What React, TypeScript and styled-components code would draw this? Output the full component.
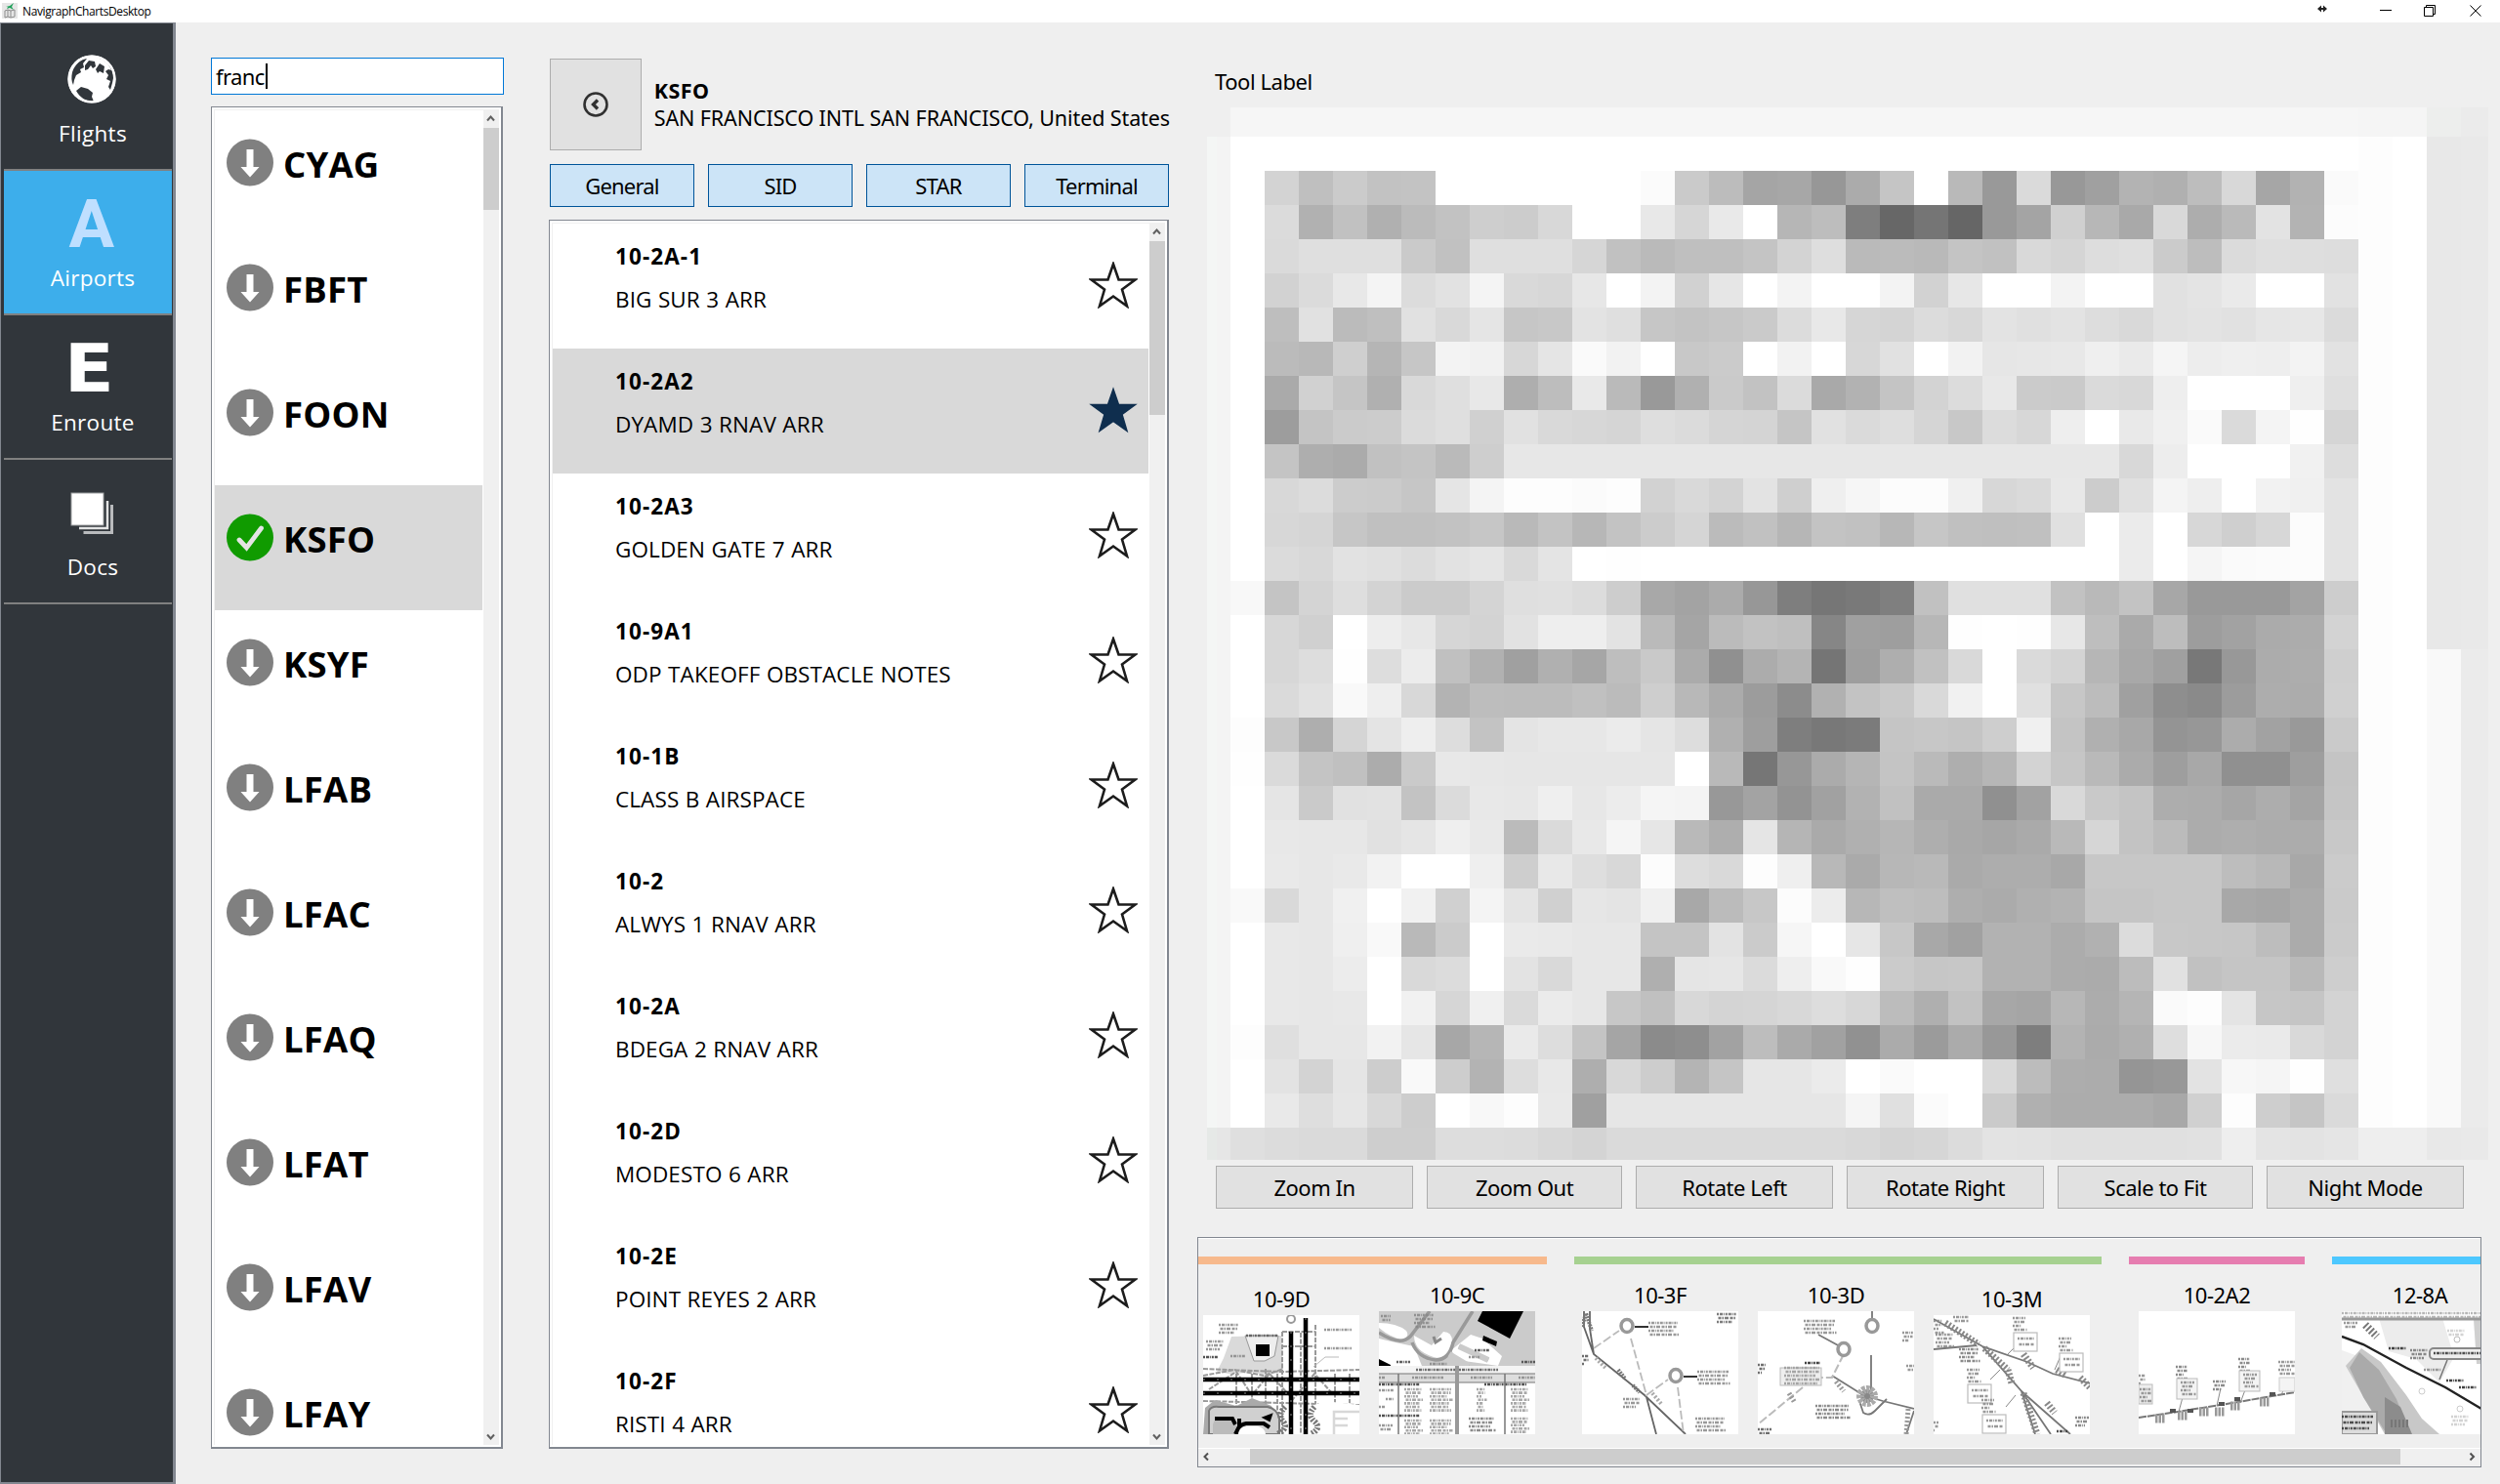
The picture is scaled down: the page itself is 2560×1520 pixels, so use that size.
import React from 'react';
import styled, { createGlobalStyle } from 'styled-components';

const tahoma = `'Noto Sans', 'Open Sans', sans-serif`;
const segoe = `'Open Sans', 'Noto Sans', sans-serif`;

const GlobalStyle = createGlobalStyle`
  * { box-sizing: border-box; }
  body { margin: 0; background: #efefef; overflow: hidden; }
  button { padding: 0; margin: 0; border-radius: 0; }
`;

const Window = styled.div`
  width: 2560px;
  height: 1520px;
  display: flex;
  flex-direction: column;
  background: #efefef;
  color: #000;
  font-family: ${tahoma};
`;

const TitleBar = styled.header`
  height: 23px;
  flex: none;
  background: #fff;
  display: flex;
  align-items: center;
  padding-left: 2px;
  font: 12px/20px ${segoe};
`;
const TitleText = styled.span`
  margin-left: 5px;
  flex: 1;
  letter-spacing: -0.4px;
`;
const WindowButtons = styled.svg`
  width: 220px;
  height: 23px;
`;
const Body = styled.div`
  flex: 1;
  display: flex;
  align-items: flex-start;
`;

const Sidebar = styled.nav`
  width: 180px;
  height: 1497px;
  background: #31363b;
  border: solid #828790;
  border-width: 1px 3px 2px 1px;
  padding: 3px 1px 0 3px;
`;
const NavItem = styled.div<{ $active?: boolean }>`
  height: 148px;
  border-bottom: 2px solid #808080;
  background: ${p => (p.$active ? '#3daeeb' : 'transparent')};
  display: flex;
  flex-direction: column;
  align-items: center;
  padding: 14px 0 0 10px;
`;
const NavIcon = styled.div`
  height: 81px;
  display: flex;
  align-items: center;
  justify-content: center;
  margin-left: -2px;
`;
const NavLetter = styled.span<{ $color: string; $wide?: boolean }>`
  font: bold 68px/80px ${p => (p.$wide ? `'DejaVu Sans', sans-serif` : `Roboto, sans-serif`)};
  color: ${p => p.$color};
  margin-left: ${p => (p.$wide ? -5 : 0)}px;
  transform: scaleX(${p => (p.$wide ? 1.1 : 1.02)});
`;
const NavLabel = styled.span`
  font: 22.5px/30px ${segoe};
  letter-spacing: 0.3px;
  color: #fff;
`;

const AirportColumn = styled.section`
  width: 300px;
  margin: 36px 0 0 36px;
  display: flex;
  flex-direction: column;
  gap: 12px;
`;
const SearchBox = styled.div`
  height: 38px;
  border: 1px solid #0078d7;
  background: #fff;
  display: flex;
  align-items: center;
  padding-left: 4px;
  font: 22px/36px ${tahoma};
  letter-spacing: -0.6px;
`;
const Caret = styled.i`
  width: 2px;
  height: 26px;
  margin-left: 1px;
  background: #000;
`;
const ListFrame = styled.div<{ $w: number; $h: number }>`
  width: ${p => p.$w}px;
  height: ${p => p.$h}px;
  background: #fff;
  border: solid #828790;
  border-width: 1px 2px 2px 1px;
  padding: 2px 2px 2px 2px;
  display: flex;
`;
const Rows = styled.div`
  flex: 1;
  border: solid #f0f0f0;
  border-width: 1px 0 0 1px;
  overflow: hidden;
`;
const AirportRow = styled.div<{ $selected?: boolean }>`
  height: 128px;
  margin-right: 1px;
  background: ${p => (p.$selected ? '#d9d9d9' : '#fff')};
  display: flex;
  padding: 29px 0 0 12px;
`;
const AirportCode = styled.span`
  font: bold 36.5px/52px ${segoe};
  letter-spacing: 0.2px;
  margin-left: 10px;
`;
const ScrollTrack = styled.div`
  width: 16px;
  background: #f0f0f0;
  display: flex;
  flex-direction: column;
`;
const ScrollArrow = styled.svg`
  width: 16px;
  height: 19px;
  flex: none;
`;
const ScrollThumb = styled.div<{ $h: number }>`
  height: ${p => p.$h}px;
  background: #cdcdcd;
  margin-bottom: auto;
`;

const ChartColumn = styled.section`
  width: 636px;
  margin: 37px 0 0 46px;
`;
const AirportHeader = styled.div`
  height: 94px;
  margin-left: 1px;
  display: flex;
`;
const BackButton = styled.button`
  width: 94px;
  height: 94px;
  border: 1px solid #adadad;
  background: #e1e1e1;
  display: flex;
  align-items: center;
  justify-content: center;
`;
const HeaderText = styled.div`
  margin: 19px 0 0 13px;
  white-space: nowrap;
  font: 21.5px/28px ${tahoma};
`;
const HeaderCode = styled.div`
  font-weight: bold;
  letter-spacing: 0.5px;
`;
const HeaderName = styled.div`
  letter-spacing: -0.1px;
`;
const Filters = styled.div`
  display: flex;
  gap: 14px;
  margin: 14px 0 13px 1px;
`;
const FilterButton = styled.button`
  width: 148px;
  height: 44px;
  border: 1px solid #005499;
  background: #cce4f7;
  font: 22px/41px ${tahoma};
  letter-spacing: -0.8px;
  color: #000;
`;
const ChartRow = styled.div<{ $selected?: boolean }>`
  height: 128px;
  background: ${p => (p.$selected ? '#d9d9d9' : '#fff')};
  margin-right: 1px;
  display: flex;
  justify-content: space-between;
  padding: 19px 11px 0 64px;
  white-space: nowrap;
`;
const ChartId = styled.div`
  font: bold 22.5px/30px ${segoe};
  letter-spacing: 1.1px;
`;
const ChartName = styled.div`
  margin-top: 14px;
  font: 22.5px/30px ${segoe};
  font-kerning: none;
  letter-spacing: 0.1px;
  word-spacing: 0.5px;
`;
const StarIcon = styled.svg`
  width: 50px;
  height: 48px;
  margin-top: 20px;
`;

const ViewerColumn = styled.main`
  margin: 46px 0 0 28px;
  width: 1325px;
`;
const ToolLabel = styled.div`
  font: 22px/28px ${tahoma};
  letter-spacing: -0.45px;
  height: 41px;
  margin-left: 18px;
`;
const Mosaic = styled.div`
  margin-left: 10px;
  width: 1312px;
  height: 1078px;
  display: grid;
  grid-template-columns: 10px 14px repeat(36, 35px) 28px;
  grid-template-rows: 30px repeat(29, 35px) 33px;
`;
const Cell = styled.i``;
const ToolButtons = styled.div`
  display: flex;
  gap: 14px;
  margin: 6px 0 29px 19px;
`;
const ToolButton = styled.button<{ $w: number }>`
  width: ${p => p.$w}px;
  height: 44px;
  border: 1px solid #adadad;
  background: #e1e1e1;
  font: 22px/41px ${tahoma};
  letter-spacing: -0.5px;
  color: #000;
`;
const Clipboard = styled.div`
  width: 1315px;
  height: 236px;
  border: 1px solid #828790;
  display: flex;
  flex-direction: column;
`;
const Groups = styled.div`
  border-top: 1px solid #fff;
  height: 215px;
  display: flex;
  gap: 28px;
  overflow: hidden;
  padding-top: 18px;
`;
const Group = styled.div<{ $color: string; $clip?: number }>`
  flex: none;
  height: 190px;
  border-top: 8px solid ${p => p.$color};
  display: flex;
  margin-left: ${p => -(p.$clip ?? 0)}px;
`;
const PinnedChart = styled.div<{ $low?: boolean; $inset?: number }>`
  width: 180px;
  padding: ${p => (p.$low ? 22 : 18)}px 0 0 ${p => p.$inset ?? 8}px;
`;
const PinnedLabel = styled.div`
  width: 160px;
  height: 30px;
  text-align: center;
  font: 22px/26px ${tahoma};
  letter-spacing: -0.5px;
`;
const Thumb = styled.svg<{ $low?: boolean }>`
  display: block;
  width: 160px;
  height: ${p => (p.$low ? 122 : 126)}px;
  background: #fff;
`;
const HScroll = styled.div`
  height: 17px;
  margin-top: auto;
  border-top: 1px solid #fff;
  display: flex;
  background: #f0f0f0;
  margin-bottom: 2px;
`;
const HArrow = styled.svg`
  width: 17px;
  height: 16px;
`;
const HThumb = styled.div`
  width: 1178px;
  margin: 0 auto 0 36px;
  background: #cdcdcd;
`;

const AppIcon = () => (
  <svg width="16" height="19" viewBox="0 0 16 19">
    <rect width="16" height="16" y="1" fill="#e6e6e6" />
    <path d="M3 9l3-1 3 1 4-1v7l-4 1-3-1-3 1zM6 8v7M9 9v7" fill="none" stroke="#8c8c8c" strokeWidth="1" />
    <path d="M4 5l4-1 4-3-2 4 2 3-4-2-3 1 1-2z" fill="#1fa05a" />
  </svg>
);

const Globe = () => (
  <svg width="50" height="52" viewBox="0 0 50 52">
    <circle cx="25" cy="25" r="24.6" fill="#fff" />
    <g fill="#31363b" transform="translate(0 -1)">
      <path d="M5 19C8 10 14 6 20 5l-4 5 1 4-4 2 1 3-5 3-2 5-1 5C4 28 4 24 5 19z" />
      <path d="M9 38l5-4 7 2 5 4-1 4 2 5c-8 0-14-4-18-11z" />
      <path d="M30 4c8 2 13 7 15 13l-3-1-3 2 3 4-2 4 4 2-2 6 2 3 2-7 1-5c0-11-7-19-17-21z" />
      <path d="M18 12l4-5 6 1 1 5-3 2-2-3-3 4-3 1zM33 10l5 3-1 7-4-2-2 2-2-4z" />
    </g>
    <circle cx="25" cy="25" r="23.4" fill="none" stroke="#fff" strokeWidth="2.2" />
  </svg>
);

const DocsIcon = () => (
  <svg width="44" height="44" viewBox="0 0 44 44">
    <path d="M13.500 41.500H42.500V13" fill="none" stroke="#b9bbbd" strokeWidth="3" />
    <path d="M9 37H38V9" fill="none" stroke="#e3e4e4" strokeWidth="2.500" />
    <rect x="1" y="1" width="33" height="33" fill="#fff" stroke="#9c9ea0" strokeWidth="1" />
  </svg>
);

const StatusIcon = ({ ready }: { ready?: boolean }) => (
  <svg width="48" height="49" viewBox="0 0 48 49">
    <circle cx="24" cy="24.500" r="24" fill={ready ? '#109b00' : '#808080'} />
    {ready ? (
      <path d="M13 27l7.500 8L35.500 15" fill="none" stroke="#e4e4e4" strokeWidth="4.800" strokeLinecap="round" />
    ) : (
      <path d="M20.500 11h7v18h6L24 39.500 14.500 29h6z" fill="#fff" />
    )}
  </svg>
);

const Star = ({ on }: { on?: boolean }) => (
  <StarIcon viewBox="0 0 50 48">
    <path
      d="M25 2.500L30.500 18.500H47.500L34 28.500 39 45.500 25 35.500 11 45.500 16 28.500 2.500 18.500H19.500z"
      fill={on ? '#0f2e4e' : '#fff'}
      stroke={on ? '#0f2e4e' : '#1c1c1c'}
      strokeWidth={on ? 1.5 : 2.6}
    />
  </StarIcon>
);

const VScroll = ({ thumb }: { thumb: number }) => (
  <ScrollTrack>
    <ScrollArrow viewBox="0 0 16 19"><path d="M4 11.500l3.500-4 3.500 4" fill="none" stroke="#606060" strokeWidth="2" /></ScrollArrow>
    <ScrollThumb $h={thumb} />
    <ScrollArrow viewBox="0 0 16 19"><path d="M4 8.500l3.500 4 3.500-4" fill="none" stroke="#606060" strokeWidth="2" /></ScrollArrow>
  </ScrollTrack>
);

/* Grey level of every block of the low-resolution chart, two hex digits each. */
const blocks = [
  'D3BFCBC2C3FFFFFFFFFFFFFBCABCA5A797ABC5FFB999DA98A0B3B0BDD8A6B2FA',
  'DBB1C1B0BBC2CECCD8FFFFE8D6E9FFB6BD7E67756699A4D0B7A9D9ADBAE3B3FC',
  'DADFDFDFCAC1DFDFDFD6C1BABFBFC4D3DEBABBB9C4C1D9D5DDDFCBBDDBDFDEDD',
  'D2DBE8F4DCE2F4D9D7E7FFF3D1E6FFF3FFFFF3D2E7FFFFF3FFFFE1E4EAFFFFE2',
  'BEE1BBBFE1D9E5C6C8E3DFC6C3C6CADCE8D6D4DCD8E3E0E3DDD9E1E3E1E6E7DB',
  'BBB8CFB5C6F3F1D7E5FAF2FFC8CBFFF2FFD7E1FFF2E6E7E8EFEAF5EDEFEEF3E2',
  'AAD1C5B0D9DFE8AEBDE9BA99B0CAC2DBA9B2C4D3DCE8CBCADAD8EEFFFFFFEFDF',
  '9DC4CBCCDBDFD0E1D9D7D5DEDBD5D4C5E1DADED5C8DCD7EEFFE9F0FADAF4FED5',
  'C4AEABC1C4BACEE7E7E7E7E7E7E7E7E7E7E7E7E7E7E7E7E7E7D8EDFFFFFFF1DD',
  'D8DCCCCBC6E5F4FDFDFBFDD2D9D3E3CFEFF6FCFCF0D7DAE8CCE0F4EEFFF2F0E3',
  'D7D5C6C0C0C2C6B9C3B7C3CCD5BBC1B6C3C1B7C6C0BFC0E0FFEBFFD7CFD7FCE3',
  'DBD8E2E0DCE2E5D9E4FFFEFFFFFFFFFFFFFFFFFFFFFFFFFFFFEBFFF5FAFBFCE3',
  'C4D4DED3CBCBD4DFE0DCCDA8A3AB977E76797FC1E0E0E0C2B9C3A7999999A3CD',
  'D7D0FFEDE7D6D3E2EEEEE3BAA5BBC2BF86A09EB7FEFFFEE7BEAABD9DA2ABACD3',
  'D7DDFEDDECC0B1A0B0A6BEC9AB90ACB4759EAEC1D9FFDAD4B6A8A07898ACADCF',
  'DAE1F9EED8B3BDBCBCC0BBCEB8AB9C8CB1C3C9D9F1FFE0C7BCA08E8A9CADACD0',
  'C8AED5E4EEDDC3E4E7E7EBE5DDB09E7E787BC5C7C5CEF0C4B0A89497ACA299CA',
  'DAC4C0ACCAE8E7E6E6E6E6E6FFB97697ABB5C4BAAEB6D3C6B9AB9EA890909EC4',
  'E5CAE1E2C3DBE8E7EFE7ECF5F498A393A1B2C1AAAA90A2D9C9C4ADACA6ADA4C5',
  'E8E7E7E1E5EFE9BBDAE8F5E6B9AEE5B5AAB0B6AEA9A6AAB9D6C3BBACAEACACC8',
  'E9E7E9F2FFFFEFCEE8DED8FCDDD9FDEFB8AAB7B9AAADADA8C7C7C7C7BDB8A8CB',
  'D9E7F0FFF1D0F4E4D0E6E4F0A8BBC7FCECB7BFBDAEABB0B3C5C5C7C7A8A6ABCA',
  'E8E7EFF9B9CBFFEAE9E7E7C4C4E3CBF6FFE6C7A8A1B2B2ACB1DCC8C7C6BDABCB',
  'E8E7ECFFD9DCFFE3D9E7E7AFE5E6DBEEF9FECBC6C7B2B2ACABBCE1C1C5C5B9CE',
  'E8E7E8FFF1D6F0DAEBE7C7C0D8D4D5D8DDD7BCAFC2A7A5B7ACB5FAFDE4C6C5D3',
  'DFE7E7F2E6A7B6EADDC4A58B8EA2BDAAA191AB9BAB987EB3ABB0DEF7EBEAD9D3',
  'E3D3E5CDF9CDB3DDE8AED8CDB4C5E6E6EBFFFAFFFFD9BCADAC9598E3F7F5FEDF',
  'E9DEE6D8CDFFF8FDE9A0E6E6E6E6E6E6E6F5E0FBFFCAB0ACACACA8D0FDCEC5DA',
];
const margins: Record<number, string> = { 12: 'F8', 16: 'FD', 17: 'FE', 21: 'F9', 25: 'FD' };
const grid: string[][] = [
  ['EFEFEF', 'EFEFEF', ...Array(33).fill('F6F6F6'), 'F5F5F5', 'F5F5F5', 'EDEEED', 'EBEBEB'],
  ['F4F6F5', 'F4F4F4', ...Array(33).fill('FFFFFF'), 'FDFDFD', 'FFFFFF', 'E8E8E8', 'E9E9E9'],
  ...blocks.map((row, i) => [
    'F4F6F5', 'F4F4F4',
    (margins[i] ?? 'FF').repeat(3),
    ...(row.match(/../g) ?? []).map(v => v.repeat(3)),
    'FDFDFD', 'FFFFFF', i < 14 ? 'E8E8E8' : 'F9F9F9', i < 14 ? 'E9E9E9' : 'EBEBEB',
  ]),
  ['E6E9E7', 'E6E6E6', 'DFDFDF',
    ...('DCDADACECEDDDDDCD8D4DADADADADADADAD8D4D6DCE3E2E0E0E0E0E1EEE4E3E5'.match(/../g) ?? []).map(v => v.repeat(3)),
    'EEEEEE', 'EEEEEE', 'E8E8E8', 'E9E9E9'],
];

/* Unreadably small chart lettering: a few broken strokes. */
const Notes = ({ x, y, w, n = 3, c = '#888', gap = 4 }: { x: number; y: number; w: number; n?: number; c?: string; gap?: number }) => (
  <g stroke={c} strokeWidth="2.600" opacity="0.85">
    {Array.from({ length: n }, (_, i) => (
      <path key={i} d={`M${x + (i % 2) * 1.5} ${y + i * gap}h${w - (i % 3) * 2}`} strokeDasharray={i % 2 ? '3 1 1.500 1 4 1.500' : '2 1 3 .8 1 1'} />
    ))}
  </g>
);
const Vor = ({ x, y }: { x: number; y: number }) => (
  <ellipse cx={x} cy={y} rx="6" ry="6.500" fill="#fff" stroke="#999" strokeWidth="3.500" />
);
const Flag = ({ x, y, c = '#888' }: { x: number; y: number; c?: string }) => (
  <g>
    <Notes x={x} y={y} w={13} n={4} c={c} />
    <rect x={x + 1} y={y + 15} width="24" height="19" fill="#fff" stroke="#bbb" strokeWidth="1.200" />
    <Notes x={x + 5} y={y + 21} w={17} n={2} c={c} gap={6} />
  </g>
);

const Taxiways = () => (
  <Thumb $low viewBox="0 0 160 122">
    <path d="M14 58l7-14 8-22 51-1 2 38-22 2-6-2-28 1z" fill="#dadada" />
    <path d="M43 21h34l-4 21-10 5H52z" fill="#eee" stroke="#999" />
    <rect x="54" y="30" width="14" height="12" fill="#000" />
    <path d="M81 17v105M100 18v104M115 10v112M81 17h34M81 32h34M0 55l80 3 80-2M0 88l160 4M0 62l32-6 30 6 20-7M34 60v35M50 60v35M64 55v40M76 60v40M135 60v30M150 60v30M6 76l28-18 16 24 18-22 24 26 22-26 18 20" fill="none" stroke="#999" strokeWidth="2" strokeDasharray="5 1.500" />
    <path d="M2 95l10-8 22 6 16-8 20 8 8 29H0z" fill="#aaa" />
    <path d="M6 122V98q2-5 10-4h50q10 2 12 12v16z" fill="#d0d0d0" stroke="#777" strokeWidth="2" />
    <path d="M10 122v-10q2-8 10-6h8l6 6v10z" fill="#bbb" />
    <path d="M12 106h18l3 6M37 106v8l-4 8M34 121q2-9 10-10h18l6 4" fill="none" stroke="#000" strokeWidth="4" />
    <path d="M62 105l8-3-2 6z" fill="#000" stroke="#000" strokeWidth="2" />
    <path d="M36 122q1-8 10-8h10q7 1 8 8z" fill="#fff" />
    <path d="M114 122V92l10-4 36 4v30z" fill="#fff" />
    <path d="M134 122V99h26M134 106h14M134 113h14" fill="none" stroke="#d8d8d8" strokeWidth="2.500" />
    <path d="M114 94q-8 8 0 15t-4 13M84 94q-8 8-2 15t-6 13" fill="none" stroke="#777" strokeWidth="6" strokeDasharray="2 1.500" />
    <path d="M0 66h160M0 80h160M90 17v105M105 3v119" stroke="#000" strokeWidth="4.500" />
    <path d="M0 66h160M0 80h160M90 17v105M105 3v119" stroke="#888" strokeWidth="1" strokeDasharray="2 12" />
    <Notes x={16} y={10} w={20} n={3} /><Notes x={3} y={27} w={18} n={3} /><Notes x={44} y={21} w={32} n={1} c="#555" />
    <Notes x={28} y={42} w={15} n={1} /><Notes x={0} y={43} w={15} n={1} c="#333" /><Notes x={124} y={15} w={28} n={1} /><Notes x={124} y={34} w={28} n={1} />
    <circle cx="90" cy="4" r="4" fill="none" stroke="#999" strokeWidth="2" />
    <path d="M113 53l12-10h14" stroke="#bbb" fill="none" />
  </Thumb>
);

const Gates = () => (
  <Thumb viewBox="0 0 160 126">
    <rect width="160" height="56" fill="#cbcbcb" />
    <path d="M0 12q18 0 28 8 4 6-4 9-12-2-24-12zM0 28q16 4 36 8l8 20H0zM36 25l18 10 12-14q12 0 8 18-4 12-18 8-20-6-20-22zM94 24l12 4 20 18-4 10-42-6-6-10z" fill="#fff" />
    <path d="M0 22q22 14 32 4L52 0M34 32q6 16 24 18 14 0 18-18L96 0M72 44l20 12M82 36l30 14" fill="none" stroke="#999" strokeWidth="3.500" />
    <path d="M72 44l20 12M82 36l30 14" stroke="#cbcbcb" strokeWidth="6" />
    <path d="M106 0h42l-14 28-33-18zM107 25l14 6-1 5-14-6zM0 49l12 6v2H0z" fill="#000" />
    <path d="M56 26l2 6 6-4" fill="none" stroke="#888" strokeWidth="3" />
    <Notes x={36} y={4} w={20} n={4} /><Notes x={2} y={5} w={10} n={2} /><Notes x={98} y={40} w={15} n={1} c="#444" /><Notes x={92} y={47} w={12} n={1} />
    <Notes x={18} y={52} w={14} n={1} c="#444" /><Notes x={52} y={54} w={18} n={1} /><Notes x={146} y={52} w={14} n={1} c="#444" />
    <rect y="56" width="160" height="8" fill="#f4f4f4" /><rect y="64" width="160" height="9" fill="#ddd" />
    <path d="M0 64h160M0 73h160" stroke="#777" />
    <Notes x={38} y={60} w={84} n={1} c="#555" />
    <Notes x={34} y={68} w={32} n={1} /><Notes x={94} y={68} w={22} n={1} /><Notes x={0} y={68} w={6} n={1} /><Notes x={143} y={68} w={17} n={1} />
    <Notes x={0} y={75} w={42} n={1} c="#333" /><Notes x={108} y={75} w={44} n={1} c="#333" /><Notes x={0} y={107} w={42} n={1} c="#333" />
    <path d="M20 64v62M129 64v62" stroke="#777" strokeWidth="1.500" /><path d="M80 56v70" stroke="#999" strokeWidth="4" />
    <Notes x={26} y={80} w={18} n={7} c="#999" gap={3.6} /><Notes x={52} y={80} w={22} n={7} c="#999" gap={3.6} />
    <Notes x={26} y={112} w={18} n={5} c="#999" gap={3.4} /><Notes x={52} y={112} w={22} n={5} c="#999" gap={3.4} />
    <Notes x={100} y={80} w={9} n={7} c="#999" gap={3.6} /><Notes x={135} y={80} w={18} n={7} c="#999" gap={3.6} />
    <Notes x={92} y={110} w={26} n={4} c="#777" /><Notes x={135} y={110} w={18} n={5} c="#999" gap={3.4} />
    <Notes x={0} y={81} w={15} n={1} /><Notes x={7} y={90} w={8} n={1} /><Notes x={0} y={98} w={6} n={1} /><Notes x={0} y={117} w={14} n={2} />
  </Thumb>
);

const Chart3F = () => (
  <Thumb viewBox="0 0 160 126">
    <path d="M2 0v16l10 28 52 42 42 40M8 0v18l4 26M66 88l10 38" fill="none" stroke="#666" strokeWidth="1.800" />
    <path d="M12 38l26-18M50 28l16 58 22-16M98 78l6 48" fill="none" stroke="#bbb" strokeWidth="1.800" strokeDasharray="9 3" />
    <Vor x={46} y={15} /><Vor x={96} y={66} />
    <path d="M54 16h14M104 67h14" stroke="#333" strokeWidth="2" />
    <Notes x={68} y={12} w={30} n={4} /><Notes x={118} y={62} w={32} n={4} /><Notes x={116} y={110} w={30} n={4} />
    <Notes x={138} y={3} w={20} n={3} c="#666" /><Notes x={42} y={90} w={17} n={3} /><Notes x={0} y={46} w={7} n={3} c="#555" />
    <path d="M0 16l4-14 6 18M37 60l7 9M52 76l7 7" stroke="#777" strokeWidth="4" fill="none" strokeDasharray="2 1" />
    <path d="M14 48l10 10M72 84l10 12" stroke="#aaa" strokeWidth="4" strokeDasharray="2 2" />
  </Thumb>
);
const Chart3D = () => (
  <Thumb viewBox="0 0 160 126">
    <path d="M117 0v12M62 24l22 12M116 45v42M76 66l32 20 20 6 32 8M104 92l4 12q6 4 12-2l12-12M160 102l-8 24" fill="none" stroke="#777" strokeWidth="1.800" />
    <path d="M46 78L0 116M88 44L76 68H64" fill="none" stroke="#bbb" strokeWidth="2" strokeDasharray="9 3" />
    <circle cx="112" cy="87" r="7" fill="#888" stroke="#aaa" strokeWidth="8" strokeDasharray="3 1" />
    <Vor x={117} y={15} /><Vor x={88} y={39} />
    <Notes x={47} y={10} w={32} n={4} /><Notes x={48} y={53} w={16} n={1} c="#222" />
    <rect x="23" y="58" width="42" height="18" fill="#eee" stroke="#bbb" /><Notes x={27} y={58} w={36} n={5} c="#999" />
    <Notes x={59} y={97} w={34} n={4} c="#777" /><Notes x={148} y={22} w={11} n={3} /><Notes x={152} y={56} w={8} n={2} />
    <Notes x={0} y={55} w={8} n={3} c="#555" /><Notes x={0} y={121} w={14} n={2} c="#555" />
    <path d="M80 72l8 10M32 84l6 10M154 100l-2 26" stroke="#999" strokeWidth="5" strokeDasharray="2 2" />
  </Thumb>
);
const Chart3M = () => (
  <Thumb $low viewBox="0 0 160 122">
    <path d="M0 4l50 28 46 16 26 12 38 10M50 32l40 46 14 44M90 78l50 44M90 78l30 44M0 35l44-4" fill="none" stroke="#777" strokeWidth="1.800" />
    <path d="M12 8l34 22M52 34l24 22M92 40l10 14M76 56l4 14M92 80l14 42M116 90l8 10M150 64l10 10M126 56l10 6" stroke="#888" strokeWidth="7" strokeDasharray="2 2" />
    <path d="M88 28l-12 12M130 42l-6 14M68 56l-10 10M84 82l-10 12" stroke="#888" />
    <Flag x={81} y={3} /><Flag x={128} y={24} /><Flag x={34} y={56} /><Flag x={49} y={87} />
    <Notes x={20} y={2} w={16} n={2} /><Notes x={2} y={20} w={18} n={4} /><Notes x={26} y={35} w={20} n={4} c="#777" />
    <Notes x={0} y={6} w={9} n={4} c="#888" /><Notes x={145} y={105} w={14} n={3} c="#777" /><Notes x={126} y={119} w={12} n={1} c="#333" /><Notes x={0} y={110} w={5} n={3} />
  </Thumb>
);
const Chart2A2 = () => (
  <Thumb viewBox="0 0 160 126">
    <path d="M0 109l40-6 50-8 70-12" fill="none" stroke="#777" strokeWidth="2" strokeDasharray="8 1" />
    <path d="M41 103l6-22M80 97l4-18M104 94l6-16M146 86l6-14" stroke="#888" />
    {[[38, 57], [102, 49]].map(([x, y]) => (
      <g key={x}>
        <Notes x={x} y={y} w={12} n={4} c="#777" />
        <rect x={x + 1} y={y + 12} width="21" height="21" fill="#f4f4f4" stroke="#bbb" />
        <Notes x={x + 5} y={y + 16} w={14} n={4} />
      </g>
    ))}
    <Notes x={143} y={52} w={17} n={4} /><Notes x={76} y={72} w={13} n={3} c="#777" /><Notes x={0} y={66} w={7} n={3} /><rect x="0" y="75" width="14" height="20" fill="#eee" stroke="#bbb" /><Notes x={1} y={80} w={12} n={4} />
    <rect x="144" y="68" width="16" height="14" fill="#f4f4f4" stroke="#ccc" />
    <path d="M17 110h10M40 107h10M62 103h10M78 103h10M94 97h10M124 93h10" stroke="#999" strokeWidth="9" strokeDasharray="2.500 1" />
    <path d="M32 102h6M50 102h6M82 95h6M98 90h6M134 85h6" stroke="#555" strokeWidth="4" />
  </Thumb>
);
const Chart8A = () => (
  <Thumb viewBox="0 0 160 126">
    <path d="M38 7h65l12 40-15 26-24-24-28-8z" fill="#ececec" /><path d="M0 40l22 8 12 78H0z" fill="#f0f0f0" />
    <path d="M135 8h25v46h-22z" fill="#d0d0d0" />
    <path d="M20 38l20 14 26 34 16 24 18 16H44L4 56z" fill="#c8c8c8" />
    <path d="M18 42l20 18 18 30 14 36H46L22 88 8 58z" fill="#aaa" /><path d="M44 88l16 10 12 28H44z" fill="#8c8c8c" />
    <path d="M0 26l22 8 44 24 40 20 54 32" fill="none" stroke="#222" strokeWidth="2.400" />
    <path d="M0 8h160" stroke="#999" strokeWidth="3" /><Notes x={0} y={2} w={160} n={2} c="#aaa" />
    <rect x="90" y="38" width="68" height="11" rx="4" fill="#eee" stroke="#888" strokeWidth="2" /><Notes x={94} y={43} w={58} n={1} c="#333" />
    <Notes x={48} y={38} w={18} n={1} c="#222" /><Notes x={70} y={40} w={18} n={3} c="#777" /><Notes x={84} y={60} w={18} n={1} /><Notes x={107} y={71} w={18} n={1} c="#222" /><Notes x={120} y={78} w={18} n={1} c="#222" />
    <path d="M108 50l-8 20" stroke="#777" strokeWidth="1.500" />
    <rect x="0" y="103" width="36" height="23" fill="#ddd" stroke="#999" strokeWidth="2" /><Notes x={0} y={108} w={32} n={3} c="#333" gap={6} />
    <path d="M24 14l12 12M50 115h18" stroke="#777" strokeWidth="8" strokeDasharray="2 2" />
    <Notes x={2} y={12} w={14} n={2} /><Notes x={108} y={20} w={18} n={2} c="#ccc" /><Notes x={112} y={108} w={18} n={3} c="#ccc" />
    <circle cx="118" cy="29" r="3" fill="none" stroke="#bbb" /><circle cx="82" cy="82" r="3" fill="none" stroke="#ccc" /><circle cx="121" cy="100" r="3" fill="none" stroke="#ccc" />
  </Thumb>
);

const airports = ['CYAG', 'FBFT', 'FOON', 'KSFO', 'KSYF', 'LFAB', 'LFAC', 'LFAQ', 'LFAT', 'LFAV', 'LFAY'];
const charts = [
  ['10-2A-1', 'BIG SUR 3 ARR'],
  ['10-2A2', 'DYAMD 3 RNAV ARR'],
  ['10-2A3', 'GOLDEN GATE 7 ARR'],
  ['10-9A1', 'ODP TAKEOFF OBSTACLE NOTES'],
  ['10-1B', 'CLASS B AIRSPACE'],
  ['10-2', 'ALWYS 1 RNAV ARR'],
  ['10-2A', 'BDEGA 2 RNAV ARR'],
  ['10-2D', 'MODESTO 6 ARR'],
  ['10-2E', 'POINT REYES 2 ARR'],
  ['10-2F', 'RISTI 4 ARR'],
];
const tools: [string, number][] = [
  ['Zoom In', 202], ['Zoom Out', 200], ['Rotate Left', 202], ['Rotate Right', 202], ['Scale to Fit', 200], ['Night Mode', 202],
];

export default function App() {
  return (
    <Window>
      <GlobalStyle />
      <TitleBar>
        <AppIcon />
        <TitleText>NavigraphChartsDesktop</TitleText>
        <WindowButtons viewBox="0 0 220 23" fill="none" stroke="#000">
          <path d="M35 9h6" strokeWidth="2" stroke="#222" /><path d="M33 9l4-3.500v7zM43 9l-4-3.500v7z" fill="#222" stroke="none" />
          <path d="M97 10.500h12" />
          <path d="M142.500 7.500h9v9h-9zM144.500 7.500v-2h9v9h-2" />
          <path d="M189.500 5.500l11 11M200.500 5.500l-11 11" />
        </WindowButtons>
      </TitleBar>
      <Body>
        <Sidebar>
          <NavItem><NavIcon><Globe /></NavIcon><NavLabel>Flights</NavLabel></NavItem>
          <NavItem $active><NavIcon><NavLetter $color="#bfdfff">A</NavLetter></NavIcon><NavLabel>Airports</NavLabel></NavItem>
          <NavItem><NavIcon><NavLetter $color="#fff" $wide>E</NavLetter></NavIcon><NavLabel>Enroute</NavLabel></NavItem>
          <NavItem><NavIcon><DocsIcon /></NavIcon><NavLabel>Docs</NavLabel></NavItem>
        </Sidebar>

        <AirportColumn>
          <SearchBox>franc<Caret /></SearchBox>
          <ListFrame $w={299} $h={1375}>
            <Rows>
              {airports.map(code => (
                <AirportRow key={code} $selected={code === 'KSFO'}>
                  <StatusIcon ready={code === 'KSFO'} />
                  <AirportCode>{code}</AirportCode>
                </AirportRow>
              ))}
            </Rows>
            <VScroll thumb={84} />
          </ListFrame>
        </AirportColumn>

        <ChartColumn>
          <AirportHeader>
            <BackButton>
              <svg width="28" height="28" viewBox="0 0 28 28" fill="none" stroke="#303030">
                <circle cx="14" cy="14" r="11.500" strokeWidth="2.600" />
                <path d="M16 9.500L11.500 14l4.500 4.500" strokeWidth="3.400" />
              </svg>
            </BackButton>
            <HeaderText>
              <HeaderCode>KSFO</HeaderCode>
              <HeaderName>SAN FRANCISCO INTL SAN FRANCISCO, United States</HeaderName>
            </HeaderText>
          </AirportHeader>
          <Filters>
            {['General', 'SID', 'STAR', 'Terminal'].map(f => <FilterButton key={f}>{f}</FilterButton>)}
          </Filters>
          <ListFrame $w={635} $h={1259}>
            <Rows>
              {charts.map(([id, name]) => (
                <ChartRow key={id} $selected={id === '10-2A2'}>
                  <div>
                    <ChartId>{id}</ChartId>
                    <ChartName>{name}</ChartName>
                  </div>
                  <Star on={id === '10-2A2'} />
                </ChartRow>
              ))}
            </Rows>
            <VScroll thumb={178} />
          </ListFrame>
        </ChartColumn>

        <ViewerColumn>
          <ToolLabel>Tool Label</ToolLabel>
          <Mosaic>
            {grid.flatMap((row, r) => row.map((c, i) => <Cell key={`${r}-${i}`} style={{ background: `#${c}` }} />))}
          </Mosaic>
          <ToolButtons>
            {tools.map(([label, w]) => <ToolButton key={label} $w={w}>{label}</ToolButton>)}
          </ToolButtons>
          <Clipboard>
            <Groups>
              <Group $color="#f7b98c" $clip={3}>
                <PinnedChart $low><PinnedLabel>10-9D</PinnedLabel><Taxiways /></PinnedChart>
                <PinnedChart><PinnedLabel>10-9C</PinnedLabel><Gates /></PinnedChart>
              </Group>
              <Group $color="#a6d190">
                <PinnedChart><PinnedLabel>10-3F</PinnedLabel><Chart3F /></PinnedChart>
                <PinnedChart><PinnedLabel>10-3D</PinnedLabel><Chart3D /></PinnedChart>
                <PinnedChart $low><PinnedLabel>10-3M</PinnedLabel><Chart3M /></PinnedChart>
              </Group>
              <Group $color="#e67db0">
                <PinnedChart $inset={10}><PinnedLabel>10-2A2</PinnedLabel><Chart2A2 /></PinnedChart>
              </Group>
              <Group $color="#4dc8ff">
                <PinnedChart $inset={10}><PinnedLabel>12-8A</PinnedLabel><Chart8A /></PinnedChart>
              </Group>
            </Groups>
            <HScroll>
              <HArrow viewBox="0 0 17 16"><path d="M10 4.500L6.500 8l3.500 3.500" fill="none" stroke="#505050" strokeWidth="2" /></HArrow>
              <HThumb />
              <HArrow viewBox="0 0 17 16"><path d="M6.500 4.500L10 8l-3.500 3.500" fill="none" stroke="#505050" strokeWidth="2" /></HArrow>
            </HScroll>
          </Clipboard>
        </ViewerColumn>
      </Body>
    </Window>
  );
}
